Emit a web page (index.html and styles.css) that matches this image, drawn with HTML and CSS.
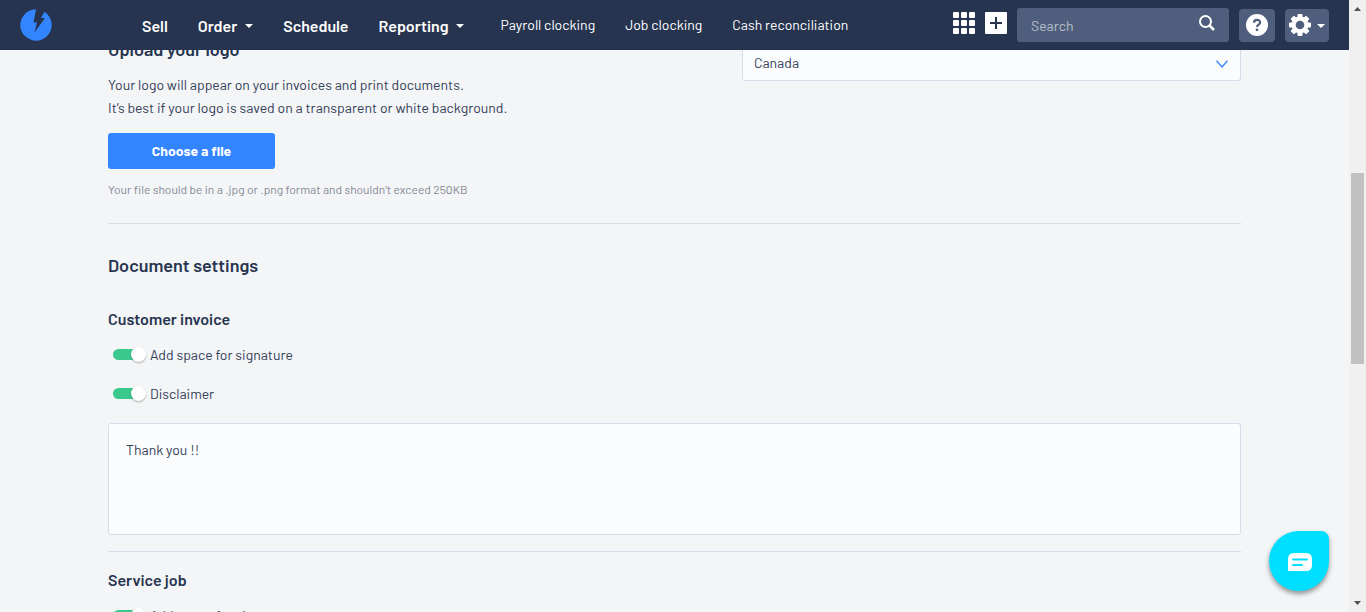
FILE: index.html
```html
<!DOCTYPE html>
<html lang="en">
<head>
<meta charset="utf-8">
<meta name="viewport" content="width=device-width, initial-scale=1">
<title>Company settings</title>
<link rel="stylesheet" href="styles.css">
</head>
<body>
<div class="app">
  <div class="page">
    <header class="topbar">
      <a class="logo" href="#" aria-label="Home">
        <svg width="32" height="32" viewBox="0 0 32 32"><path fill="#3385ff" d="M16 0.300A15.700 15.700 0 1 0 24.500 2.800L21 9H25L14.500 23.500L17 13.500H13.500Z"/></svg>
      </a>
      <nav class="nav-main">
        <a href="#">Sell</a>
        <a href="#">Order<span class="caret"></span></a>
        <a href="#">Schedule</a>
        <a href="#">Reporting<span class="caret"></span></a>
      </nav>
      <nav class="nav-sub">
        <a href="#">Payroll clocking</a>
        <a href="#">Job clocking</a>
        <a href="#">Cash reconciliation</a>
      </nav>
      <div class="tools">
        <button class="icon-btn" type="button" aria-label="Apps">
          <svg width="22" height="22" viewBox="0 0 22 22" fill="#fff"><rect width="6" height="6" rx="1"/><rect x="8" width="6" height="6" rx="1"/><rect x="16" width="6" height="6" rx="1"/><rect y="8" width="6" height="6" rx="1"/><rect x="8" y="8" width="6" height="6" rx="1"/><rect x="16" y="8" width="6" height="6" rx="1"/><rect y="16" width="6" height="6" rx="1"/><rect x="8" y="16" width="6" height="6" rx="1"/><rect x="16" y="16" width="6" height="6" rx="1"/></svg>
        </button>
        <button class="icon-btn" type="button" aria-label="Add">
          <svg width="22" height="22" viewBox="0 0 22 22"><rect width="22" height="22" rx="1" fill="#fff"/><path d="M11 5V17M5 11H17" stroke="#27344f" stroke-width="2"/></svg>
        </button>
        <form class="search">
          <input type="text" placeholder="Search" aria-label="Search">
          <button class="search-btn" type="button" aria-label="Run search">
            <svg width="16" height="16" viewBox="0 0 16 16" fill="none" stroke="#fff"><circle cx="6.500" cy="6.500" r="5.500" stroke-width="2"/><path d="M10.500 10.500L15 15" stroke-width="2.500"/></svg>
          </button>
        </form>
        <button class="tool-btn help" type="button" aria-label="Help">
          <svg width="22" height="22" viewBox="0 0 22 22"><circle cx="11" cy="11" r="11" fill="#fff"/><path d="M8 8.800C8 5 14.200 5 14.200 8.500C14.200 10.700 11 10.500 11 13" fill="none" stroke="#4f5e7d" stroke-width="2.200"/><circle cx="11" cy="15.800" r="1.400" fill="#4f5e7d"/></svg>
        </button>
        <button class="tool-btn settings" type="button" aria-label="Settings">
          <svg width="22" height="22" viewBox="0 0 22 22"><g fill="#fff"><circle cx="11" cy="11" r="8.500"/><g id="teeth"><rect x="8.500" y="0" width="5" height="22" rx="1"/><rect x="0" y="8.500" width="22" height="5" rx="1"/></g><use href="#teeth" transform="rotate(45 11 11)"/></g><circle cx="11" cy="11" r="4.300" fill="#4f5e7d"/></svg>
          <span class="caret"></span>
        </button>
      </div>
    </header>

    <main class="content">
      <section class="profile">
        <div class="upload">
          <h2>Upload your logo</h2>
          <p>Your logo will appear on your invoices and print documents.<br>It’s best if your logo is saved on a transparent or white background.</p>
          <button class="primary" type="button">Choose a file</button>
          <p class="hint">Your file should be in a .jpg or .png format and shouldn’t exceed 250KB</p>
        </div>
        <div class="country">
          <select aria-label="Country"><option>Canada</option></select>
          <svg class="chevron" width="12" height="8" viewBox="0 0 12 8" fill="none" stroke="#3385ff" stroke-width="1.300"><path d="M.5 .8L6 7L11.500 .8"/></svg>
        </div>
      </section>

      <section class="documents">
        <h2>Document settings</h2>
        <h3>Customer invoice</h3>
        <label class="toggle"><input type="checkbox" checked>Add space for signature</label>
        <label class="toggle"><input type="checkbox" checked>Disclaimer</label>
        <textarea aria-label="Disclaimer text">Thank you !!</textarea>
      </section>

      <section class="service">
        <h3>Service job</h3>
        <label class="toggle"><input type="checkbox" checked>Add space for signature</label>
      </section>
    </main>

    <button class="chat" type="button" aria-label="Chat">
      <svg width="24" height="18" viewBox="0 0 24 18"><path fill="#fff" d="M6 0H18Q24 0 24 6V12Q24 18 18 18H1Q0 18 0 17V6Q0 0 6 0Z"/><path d="M5 6.500H19M5 12H14" stroke="#00dfff" stroke-width="2" stroke-linecap="round"/></svg>
    </button>
  </div>
  <div class="scrollbar" aria-hidden="true">
    <svg width="7" height="4" viewBox="0 0 7 4"><path d="M0 4L3.500 0L7 4Z" fill="#505050"/></svg>
    <div class="track"><div class="thumb"></div></div>
    <svg width="7" height="4" viewBox="0 0 7 4"><path d="M0 0H7L3.500 4Z" fill="#505050"/></svg>
  </div>
</div>
</body>
</html>
```
FILE: styles.css
```css
* { box-sizing: border-box; }

body {
  margin: 0;
  background: #f3f5f7;
  color: #344058;
  font: 14px/23px Barlow, Roboto, sans-serif;
}

button, input, select, textarea { font: inherit; color: inherit; }
button { border: 0; padding: 0; background: none; cursor: pointer; }
svg { display: block; flex: none; }
h2, h3, p { margin: 0; }
h2, h3 { color: #27344f; font-weight: 600; }
h2 { font-size: 18px; line-height: 24px; }
h3 { font-size: 16px; line-height: 20px; }

.app { display: flex; height: 100vh; overflow: hidden; }
.page { flex: 1; min-width: 0; display: flex; flex-direction: column; position: relative; }

.topbar {
  display: flex;
  align-items: center;
  flex: none;
  height: 50px;
  padding: 0 20px;
  background: #27344f;
  color: #fff;
}
.topbar a { color: inherit; text-decoration: none; white-space: nowrap; }
.nav-main { display: flex; gap: 30px; margin-left: 90px; font-size: 16px; font-weight: 600; }
.nav-main a { display: flex; align-items: center; gap: 8px; }
.nav-sub { display: flex; gap: 30px; margin-left: 36px; padding-bottom: 2px; }
.caret { margin-top: 2px; border: 4px solid transparent; border-top-color: #fff; border-bottom: 0; }

.tools { display: flex; align-items: center; gap: 10px; margin-left: auto; }
.icon-btn { margin-bottom: 4px; }
.search {
  display: flex;
  align-items: center;
  width: 212px;
  height: 34px;
  padding: 0 14px;
  border-radius: 3px;
  background: #4f5e7d;
}
.search input { flex: 1; min-width: 0; padding: 0; border: 0; outline: 0; background: none; }
.search input::placeholder { color: #b9c0cc; opacity: 1; }
.search-btn { margin-bottom: 4px; }
.tool-btn {
  display: flex;
  align-items: center;
  justify-content: center;
  height: 33px;
  border-radius: 4px;
  background: #4f5e7d;
}
.help { width: 36px; }
.settings { width: 44px; gap: 6px; }

.content { flex: 1; min-height: 0; overflow: hidden; padding: 0 108px; }
.profile {
  display: grid;
  grid-template-columns: 1fr 1fr;
  gap: 135px;
  margin-top: -13px;
  padding-bottom: 24px;
  border-bottom: 1px solid #dadde1;
}
.upload p { margin-top: 12px; white-space: nowrap; }
.upload .hint { margin-top: 10px; font-size: 12px; line-height: 20px; color: #858996; }
.primary {
  width: 167px;
  height: 36px;
  margin-top: 14px;
  padding-bottom: 2px;
  border-radius: 3px;
  background: #3385ff;
  color: #fff;
  font-weight: 700;
}
.country { position: relative; margin-top: 8px; height: 36px; }
.country select {
  appearance: none;
  width: 100%;
  height: 36px;
  padding: 0 11px 2px;
  border: 1px solid #d8dce8;
  border-radius: 3px;
  background: #fafcfe;
}
.chevron { position: absolute; right: 13px; top: 15px; pointer-events: none; }

.documents { padding: 29px 0 16px; border-bottom: 1px solid #d8dce8; }
.documents h3 { margin-top: 32px; }
.toggle {
  display: flex;
  align-items: center;
  gap: 5px;
  width: max-content;
  height: 23px;
  margin: 14px 0 16px 5px;
}
.toggle input {
  appearance: none;
  position: relative;
  width: 32px;
  height: 11px;
  margin: 0;
  border-radius: 6px;
  background: #3bc88c;
}
.toggle input::before {
  content: "";
  position: absolute;
  right: -1px;
  top: -2px;
  width: 15px;
  height: 15px;
  border-radius: 50%;
  background: #fff;
  box-shadow: 0 1px 2px rgba(0, 0, 0, .3);
}
.documents textarea {
  display: block;
  width: 100%;
  height: 112px;
  margin-top: 18px;
  padding: 14px 17px;
  border: 1px solid #d8dce8;
  border-radius: 3px;
  background: #fafcfe;
  resize: none;
}
.service { padding-top: 18px; }

.chat {
  position: absolute;
  right: 20px;
  bottom: 21px;
  display: grid;
  place-items: center;
  width: 60px;
  height: 60px;
  padding: 2px 0 0 2px;
  border-radius: 30px 8px 30px 30px;
  background: #00dfff;
  box-shadow: 0 3px 5px rgba(0, 0, 0, .4);
}

.scrollbar {
  display: flex;
  flex-direction: column;
  align-items: center;
  width: 17px;
  padding: 7px 0;
  background: #f0f0f0;
}
.track { flex: 1; width: 13px; padding-top: 162px; }
.thumb { height: 191px; background: #c1c1c1; }
```
